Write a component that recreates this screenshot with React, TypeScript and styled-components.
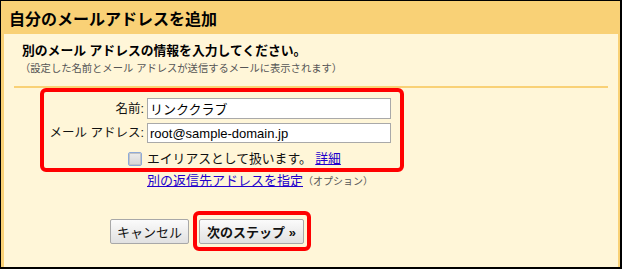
import React from "react";
import styled, { createGlobalStyle } from "styled-components";

const Global = createGlobalStyle`
  html, body { margin: 0; padding: 0; background: #fff; }
  body { font-family: "Liberation Sans", "Noto Sans CJK JP", sans-serif; color: #111; }
`;

const Frame = styled.div`
  box-sizing: border-box;
  width: 622px;
  height: 269px;
  border-style: solid;
  border-color: #000;
  border-width: 1px 2px 2px 1px;
  background: #f9d176;
  padding: 0 2px 0 3px;
  display: flex;
  flex-direction: column;
`;

const Header = styled.h1`
  margin: 0;
  height: 33px;
  display: flex;
  align-items: center;
  padding-left: 5px;
  font-size: 16px;
  font-weight: bold;
  color: #000;
`;

const Body = styled.div`
  flex: 1;
  background: #fff6d8;
  padding: 9px 10px 0 10px;
  display: flex;
  flex-direction: column;
  align-items: flex-start;
`;

const Title = styled.p`
  margin: 0 0 0 8px;
  font-size: 12.8px;
  line-height: 16px;
  font-weight: bold;
  color: #000;
`;

const Note = styled.p`
  margin: 3px 0 0 6px;
  font-size: 10.3px;
  line-height: 13px;
  color: #555;
`;

const Divider = styled.hr`
  align-self: stretch;
  margin: 11px 0 0 0;
  border: 0;
  height: 2px;
  background: #f9d176;
`;

const Highlight = styled.div`
  box-sizing: border-box;
  margin-left: 26px;
  width: 364px;
  height: 84px;
  border: 4px solid #f00;
  border-radius: 6px;
  padding-top: 6px;
`;

const FormGrid = styled.div`
  display: grid;
  grid-template-columns: 100px 244px;
  column-gap: 3px;
  row-gap: 4px;
  align-items: center;
`;

const Label = styled.label`
  text-align: right;
  font-size: 12.5px;
  line-height: 16px;
  color: #111;
  white-space: nowrap;
`;

const Input = styled.input<{ $h: number }>`
  box-sizing: border-box;
  width: 244px;
  height: ${(p) => p.$h}px;
  margin: 0;
  border: 1px solid #a9a9a9;
  background: #fff;
  padding: 0 2px;
  font-family: "Liberation Sans", "Noto Sans CJK JP", sans-serif;
  font-size: 13px;
  color: #000;
  outline: none;
`;

const CheckCell = styled.div`
  display: flex;
  justify-content: flex-end;
  padding-right: 2px;
  height: 21px;
  align-items: center;
`;

const Check = styled.span`
  box-sizing: border-box;
  display: block;
  width: 14px;
  height: 14px;
  margin-top: 2px;
  border: 1px solid #8eaad8;
  border-radius: 2px;
  background: linear-gradient(#ececec, #d6d6d6);
  box-shadow: inset 0 0 0 1px #c4c4c4;
`;

const CheckText = styled.span`
  font-size: 12.8px;
  line-height: 16px;
  color: #111;
  margin-top: 2px;
`;

const Link = styled.a`
  color: #2200cc;
  text-decoration: underline;
  cursor: pointer;
`;

const LinkRow = styled.div`
  margin: 1px 0 0 133px;
  font-size: 13px;
  line-height: 16px;
`;

const Optional = styled.span`
  font-size: 10px;
  color: #555;
`;

const ButtonRow = styled.div`
  margin: 21px 0 0 96px;
  display: flex;
  align-items: center;
  gap: 4px;
`;

const Button = styled.button<{ $primary?: boolean }>`
  box-sizing: border-box;
  height: 25px;
  margin: 0;
  padding: 0 ${(p) => (p.$primary ? 7 : 6)}px;
  border: 1px solid #a8a8a8;
  border-radius: 2px;
  background: linear-gradient(#fbfbfb, #e1e1e1);
  font-family: "Liberation Sans", "Noto Sans CJK JP", sans-serif;
  font-size: 13px;
  font-weight: ${(p) => (p.$primary ? "bold" : "normal")};
  color: #111;
  cursor: pointer;
`;

const ButtonMark = styled.div`
  border: 4px solid #f00;
  border-radius: 6px;
  padding: 4px 3px 3px 2px;
  display: flex;
`;

export default function App() {
  return (
    <>
      <Global />
      <Frame>
        <Header>自分のメールアドレスを追加</Header>
        <Body>
          <Title>別のメール アドレスの情報を入力してください。</Title>
          <Note>（設定した名前とメール アドレスが送信するメールに表示されます）</Note>
          <Divider />
          <Highlight>
            <FormGrid>
              <Label>名前:</Label>
              <Input $h={21} defaultValue="リンククラブ" />
              <Label>メール アドレス:</Label>
              <Input $h={20} defaultValue="root@sample-domain.jp" />
              <CheckCell>
                <Check />
              </CheckCell>
              <CheckText>
                エイリアスとして扱います。 <Link>詳細</Link>
              </CheckText>
            </FormGrid>
          </Highlight>
          <LinkRow>
            <Link>別の返信先アドレスを指定</Link>
            <Optional>（オプション）</Optional>
          </LinkRow>
          <ButtonRow>
            <Button>キャンセル</Button>
            <ButtonMark>
              <Button $primary>次のステップ »</Button>
            </ButtonMark>
          </ButtonRow>
        </Body>
      </Frame>
    </>
  );
}
